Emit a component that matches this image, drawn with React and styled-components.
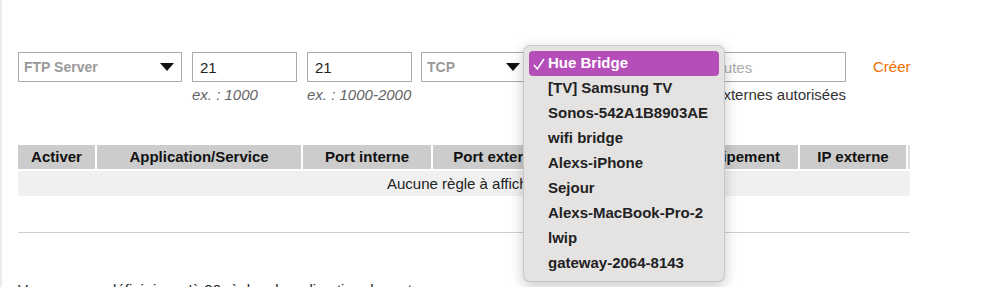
import React from 'react';
import styled, { createGlobalStyle } from 'styled-components';

const GlobalStyle = createGlobalStyle`
  html, body {
    margin: 0;
    padding: 0;
    background: #fff;
    font-family: 'Liberation Sans', Arial, Helvetica, sans-serif;
    font-size: 15px;
    color: #222;
  }
`;

const Page = styled.div`
  border-left: 2px solid #ececec;
  padding: 52px 71px 0 16px;
  height: 287px;
  box-sizing: border-box;
  overflow: hidden;
`;

const FormRow = styled.div`
  display: flex;
  align-items: flex-start;
`;

const Field = styled.div`
  position: relative;
  width: ${(p) => p.width}px;
  margin-right: ${(p) => p.gap || 0}px;
  flex-shrink: 0;
`;

const SelectBox = styled.div`
  height: 30px;
  box-sizing: border-box;
  border: 1px solid #aaa;
  display: flex;
  align-items: center;
  justify-content: space-between;
  padding: 0 7px 0 5px;
  font-size: 14px;
  font-weight: bold;
  color: ${(p) => (p.filled ? '#222' : '#9a9a9a')};
  background: #fff;
`;

const TextInput = styled.input`
  display: block;
  width: 100%;
  height: 30px;
  box-sizing: border-box;
  border: 1px solid #aaa;
  padding: 0 7px;
  font-family: inherit;
  font-size: 15px;
  color: #222;
  outline: none;
  &::placeholder {
    color: #aaa;
  }
`;

const Hint = styled.div`
  margin-top: 4px;
  display: flex;
  justify-content: ${(p) => (p.plain ? 'flex-end' : 'flex-start')};
  font-size: 15px;
  color: ${(p) => (p.plain ? '#333' : '#666')};
  font-style: ${(p) => (p.plain ? 'normal' : 'italic')};
  white-space: nowrap;
`;

const CreateLink = styled.a`
  margin-left: 27px;
  line-height: 30px;
  color: #f16e00;
  text-decoration: none;
  cursor: pointer;
`;

const Table = styled.div`
  margin-top: 42px;
  width: 892px;
  display: grid;
  grid-template-columns: 77px 204px 128px 128px 111px 122px 106px 2px;
  column-gap: 2px;
  row-gap: 2px;
`;

const HeadCell = styled.div`
  height: 24px;
  line-height: 24px;
  background: ${(p) => (p.thin ? '#dedede' : '#cccccc')};
  font-weight: bold;
  text-align: center;
  color: #111;
  white-space: nowrap;
  overflow: hidden;
`;

const EmptyRow = styled.div`
  grid-column: 1 / -1;
  height: 25px;
  line-height: 25px;
  background: #f0f0f0;
  text-align: center;
  color: #222;
`;

const Separator = styled.hr`
  margin: 36px 0 0;
  width: 892px;
  border: 0;
  border-top: 1px solid #cfcfcf;
`;

const Note = styled.p`
  margin: 48px 0 0;
  line-height: 18px;
  color: #222;
`;

const Menu = styled.div`
  position: absolute;
  left: -15px;
  top: -7px;
  width: 202px;
  height: 237px;
  box-sizing: border-box;
  padding: 5px 5px;
  background: #e4e3e2;
  border: 1px solid rgba(0, 0, 0, 0.12);
  border-radius: 7px;
  box-shadow: 0 4px 14px rgba(0, 0, 0, 0.22);
  z-index: 10;
`;

const MenuItem = styled.div`
  height: 24.9px;
  display: flex;
  align-items: center;
  border-radius: 4px;
  padding-left: 19px;
  padding-bottom: 1px;
  box-sizing: border-box;
  position: relative;
  font-weight: bold;
  font-size: 15px;
  white-space: nowrap;
  color: ${(p) => (p.selected ? '#fff' : '#222')};
  background: ${(p) => (p.selected ? '#b64eb9' : 'transparent')};
`;

const Check = styled.svg`
  position: absolute;
  left: 4px;
  top: 7px;
`;

function Arrow() {
  return (
    <svg width="14" height="8" viewBox="0 0 14 8">
      <path d="M0 0 L14 0 L7 8 Z" fill="#111" />
    </svg>
  );
}

const devices = [
  'Hue Bridge',
  '[TV] Samsung TV',
  'Sonos-542A1B8903AE',
  'wifi bridge',
  'Alexs-iPhone',
  'Sejour',
  'Alexs-MacBook-Pro-2',
  'lwip',
  'gateway-2064-8143',
];

const columns = [
  'Activer',
  'Application/Service',
  'Port interne',
  'Port externe',
  'Protocole',
  'Équipement',
  'IP externe',
];

export default function App() {
  return (
    <>
      <GlobalStyle />
      <Page>
        <FormRow>
          <Field width={164} gap={10}>
            <SelectBox>
              FTP Server
              <Arrow />
            </SelectBox>
          </Field>
          <Field width={105} gap={10}>
            <TextInput defaultValue="21" />
            <Hint>ex. : 1000</Hint>
          </Field>
          <Field width={105} gap={9}>
            <TextInput defaultValue="21" />
            <Hint>ex. : 1000-2000</Hint>
          </Field>
          <Field width={107} gap={10}>
            <SelectBox>
              TCP
              <Arrow />
            </SelectBox>
          </Field>
          <Field width={152} gap={10}>
            <SelectBox filled>
              Hue Bridge
              <Arrow />
            </SelectBox>
            <Menu>
              {devices.map((d, i) => (
                <MenuItem key={d} selected={i === 0}>
                  {i === 0 && (
                    <Check width="12" height="12" viewBox="0 0 12 12">
                      <path d="M1 7 L4.3 11 L11 1" fill="none" stroke="#fff" strokeWidth="1.5" />
                    </Check>
                  )}
                  {d}
                </MenuItem>
              ))}
            </Menu>
          </Field>
          <Field width={146}>
            <TextInput placeholder="Toutes" />
            <Hint plain>IP externes autorisées</Hint>
          </Field>
          <CreateLink>Créer</CreateLink>
        </FormRow>

        <Table>
          {columns.map((c) => (
            <HeadCell key={c}>{c}</HeadCell>
          ))}
          <HeadCell thin />
          <EmptyRow>Aucune règle à afficher</EmptyRow>
        </Table>

        <Separator />

        <Note>Vous pouvez définir jusqu'à 20 règles de redirection de ports.</Note>
      </Page>
    </>
  );
}
